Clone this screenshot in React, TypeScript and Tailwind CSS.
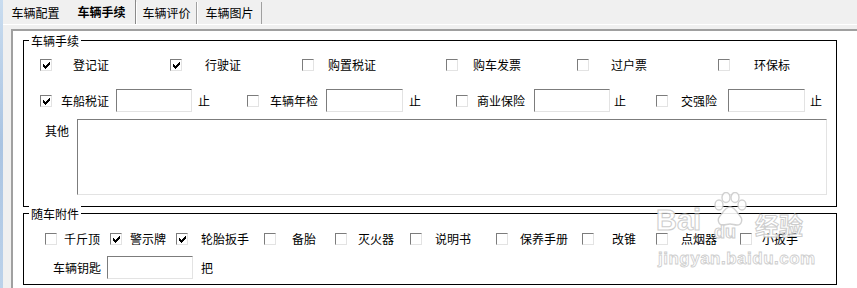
import React from "react";

const CHECK_D =
  "M6 0h1v1h-1z M5 1h2v1h-2z M0 2h1v1h-1z M4 2h3v1h-3z M0 3h2v1h-2z M3 3h3v1h-3z M0 4h5v1h-5z M1 5h3v1h-3z M2 6h1v1h-1z";

function Box({ checked = false }: { checked?: boolean }) {
  return (
    <span className="relative block w-[12px] h-[12px] shrink-0 border border-t-[#7c7c7c] border-l-[#7c7c7c] border-r-[#e3e3e3] border-b-[#e3e3e3] bg-white">
      {checked && (
        <svg
          className="absolute left-[2px] top-[2px]"
          width="7"
          height="7"
          viewBox="0 0 7 7"
          shapeRendering="crispEdges"
        >
          <path d={CHECK_D} fill="#000" />
        </svg>
      )}
    </span>
  );
}

function Field({ className }: { className: string }) {
  return (
    <span
      className={
        "block shrink-0 border border-t-[#7c7c7c] border-l-[#7c7c7c] border-r-[#e3e3e3] border-b-[#e3e3e3] bg-white " +
        className
      }
    />
  );
}

function Item({
  className,
  labelClass,
  label,
  checked = false,
}: {
  className: string;
  labelClass: string;
  label: string;
  checked?: boolean;
}) {
  return (
    <div className={"flex items-center shrink-0 " + className}>
      <Box checked={checked} />
      <span className={"whitespace-nowrap " + labelClass}>{label}</span>
    </div>
  );
}

function Group({
  title,
  className,
  children,
}: {
  title: string;
  className: string;
  children: React.ReactNode;
}) {
  return (
    <div className={"relative w-[814px] border border-black flex flex-col " + className}>
      <span className="absolute left-[5px] -top-[9px] px-[2px] bg-white leading-[17px] whitespace-nowrap">
        {title}
      </span>
      {children}
    </div>
  );
}

function Paw() {
  return (
    <svg width="36" height="36" viewBox="0 0 36 36" fill="#ffffff" stroke="#cdcdcd" strokeWidth="1.4">
      <ellipse cx="7" cy="13" rx="4" ry="5" />
      <ellipse cx="14" cy="5.5" rx="4" ry="5" />
      <ellipse cx="23" cy="5.5" rx="4" ry="5" />
      <ellipse cx="30" cy="13" rx="4" ry="5" />
      <path d="M18 15c-5 0-7 6-10 9-3 3-2 9 3 9 3 0 4-1 7-1s4 1 7 1c5 0 6-6 3-9-3-3-5-9-10-9z" />
    </svg>
  );
}

export default function App() {
  return (
    <div
      className="relative w-[857px] h-[288px] flex bg-[#f0f0f0] overflow-hidden text-[12px] text-black"
      style={{ fontFamily: '"Noto Sans CJK SC", "Noto Sans", sans-serif' }}
    >
      <div className="w-[3px] shrink-0 bg-gradient-to-b from-[#c9dcef] via-[#aac4e2] to-[#bcd2ea]" />
      <div className="flex-1 flex flex-col">
        {/* tabs */}
        <div className="h-[24px] flex items-stretch shrink-0">
          <div className="w-[65px] mt-[2px] flex items-center justify-center">车辆配置</div>
          <div className="w-[68px] flex items-center justify-center font-bold border-r border-r-[#8a8a8a] pb-[1px]">
            车辆手续
          </div>
          <div className="w-[61px] mt-[2px] flex items-center justify-center border-l border-l-white border-r border-r-[#a0a0a0]">
            车辆评价
          </div>
          <div className="w-[65px] mt-[2px] flex items-center justify-center border-l border-l-white border-r border-r-[#a0a0a0]">
            车辆图片
          </div>
        </div>
        <div className="h-px bg-white shrink-0" />
        <div className="flex-1 pl-[8px] pt-[4px] flex">
          <div className="flex-1 bg-white border-l-2 border-t-2 border-[#a0a0a0] pl-[10px] pt-[9px] flex flex-col">
            <Group title="车辆手续" className="h-[167px]">
              {/* row 1 */}
              <div className="flex items-center h-[16px] mt-[16px] pl-[16px]">
                <Item className="w-[130px]" labelClass="ml-[21px]" label="登记证" checked />
                <Item className="w-[132px]" labelClass="ml-[23px]" label="行驶证" checked />
                <Item className="w-[144px]" labelClass="ml-[14px]" label="购置税证" />
                <Item className="w-[131px]" labelClass="ml-[15px]" label="购车发票" />
                <Item className="w-[141px]" labelClass="ml-[22px]" label="过户票" />
                <Item className="w-[80px]" labelClass="ml-[24px]" label="环保标" />
              </div>
              {/* row 2 */}
              <div className="flex items-center h-[23px] mt-[16px] pl-[16px]">
                <div className="w-[207px] flex items-center shrink-0">
                  <Box checked />
                  <span className="ml-[9px]">车船税证</span>
                  <Field className="ml-[7px] w-[76px] h-[23px]" />
                  <span className="ml-[6px]">止</span>
                </div>
                <div className="w-[209px] flex items-center shrink-0">
                  <Box />
                  <span className="ml-[11px]">车辆年检</span>
                  <Field className="ml-[8px] w-[77px] h-[23px]" />
                  <span className="ml-[6px]">止</span>
                </div>
                <div className="w-[200px] flex items-center shrink-0">
                  <Box />
                  <span className="ml-[9px]">商业保险</span>
                  <Field className="ml-[9px] w-[76px] h-[23px]" />
                  <span className="ml-[4px]">止</span>
                </div>
                <div className="flex items-center shrink-0">
                  <Box />
                  <span className="ml-[13px]">交强险</span>
                  <Field className="ml-[11px] w-[77px] h-[23px]" />
                  <span className="ml-[5px]">止</span>
                </div>
              </div>
              {/* row 3 */}
              <div className="flex items-start mt-[7px] pl-[21px]">
                <span className="mt-[3px] leading-[17px]">其他</span>
                <Field className="ml-[8px] w-[750px] h-[76px]" />
              </div>
            </Group>
            <Group title="随车附件" className="mt-[6px] h-[72px]">
              <div className="flex items-center h-[16px] mt-[17px] pl-[21px]">
                <Item className="w-[65px]" labelClass="ml-[7px]" label="千斤顶" />
                <Item className="w-[66px]" labelClass="ml-[8px]" label="警示牌" checked />
                <Item className="w-[88px]" labelClass="ml-[13px]" label="轮胎扳手" checked />
                <Item className="w-[71px]" labelClass="ml-[16px]" label="备胎" />
                <Item className="w-[75px]" labelClass="ml-[11px]" label="灭火器" />
                <Item className="w-[86px]" labelClass="ml-[13px]" label="说明书" />
                <Item className="w-[86px]" labelClass="ml-[12px]" label="保养手册" />
                <Item className="w-[74px]" labelClass="ml-[18px]" label="改锥" />
                <Item className="w-[84px]" labelClass="ml-[13px]" label="点烟器" />
                <Item className="w-[60px]" labelClass="ml-[10px]" label="小扳手" />
              </div>
              <div className="flex items-center h-[23px] mt-[9px] pl-[29px]">
                <span>车辆钥匙</span>
                <Field className="ml-[6px] w-[86px] h-[23px]" />
                <span className="ml-[8px]">把</span>
              </div>
            </Group>
          </div>
        </div>
      </div>

      {/* watermark */}
      <div className="absolute left-[650px] top-[185px] w-[165px] h-[85px] opacity-90 pointer-events-none">
        <span
          className="absolute left-[6px] top-[21px] text-[29px] leading-[29px] font-bold text-white [-webkit-text-stroke:1px_#c8c8c8]"
          style={{ fontFamily: '"Liberation Sans", Arial, sans-serif' }}
        >
          Bai
        </span>
        <div className="absolute left-[62px] top-[7px]">
          <Paw />
        </div>
        <span
          className="absolute left-[64px] top-[38px] text-[18px] leading-[18px] font-bold text-white [-webkit-text-stroke:1px_#c8c8c8]"
          style={{ fontFamily: '"Liberation Sans", Arial, sans-serif' }}
        >
          du
        </span>
        <span className="absolute left-[105px] top-[27px] text-[24px] leading-[26px] font-bold text-white [-webkit-text-stroke:1px_#c8c8c8]">
          经验
        </span>
        <span
          className="absolute left-[8px] top-[65px] text-[17px] leading-[17px] font-bold tracking-[0.5px] text-white [-webkit-text-stroke:0.8px_#c8c8c8] whitespace-nowrap"
          style={{ fontFamily: '"Liberation Sans", Arial, sans-serif' }}
        >
          jingyan.baidu.com
        </span>
      </div>
    </div>
  );
}
